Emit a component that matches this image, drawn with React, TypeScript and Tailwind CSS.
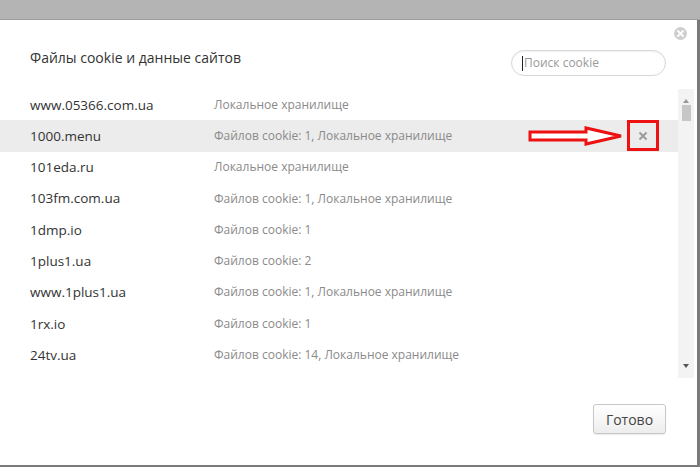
import React from "react";

type Site = { host: string; info: string };

const sites: Site[] = [
  { host: "www.05366.com.ua", info: "Локальное хранилище" },
  { host: "1000.menu", info: "Файлов cookie: 1, Локальное хранилище" },
  { host: "101eda.ru", info: "Локальное хранилище" },
  { host: "103fm.com.ua", info: "Файлов cookie: 1, Локальное хранилище" },
  { host: "1dmp.io", info: "Файлов cookie: 1" },
  { host: "1plus1.ua", info: "Файлов cookie: 2" },
  { host: "www.1plus1.ua", info: "Файлов cookie: 1, Локальное хранилище" },
  { host: "1rx.io", info: "Файлов cookie: 1" },
  { host: "24tv.ua", info: "Файлов cookie: 14, Локальное хранилище" },
];

const font = { fontFamily: '"Open Sans", "Noto Sans", sans-serif' };

function CloseCircle() {
  return (
    <svg width="13" height="13" viewBox="0 0 13 13">
      <circle cx="6.5" cy="6.5" r="6.5" fill="#cfcfcf" />
      <path d="M4 4 L9 9 M9 4 L4 9" stroke="#fff" strokeWidth="1.8" strokeLinecap="round" />
    </svg>
  );
}

function Arrow() {
  return (
    <svg width="96" height="22" viewBox="0 0 96 22">
      <path
        d="M2 7 L58 7 L58 3 L93 11 L58 19 L58 15 L2 15 Z"
        fill="#fff"
        stroke="#ee1111"
        strokeWidth="3"
        strokeLinejoin="miter"
      />
    </svg>
  );
}

function RemoveIcon() {
  return (
    <svg width="10" height="10" viewBox="0 0 10 10">
      <path d="M1.5 1.5 L8.5 8.5 M8.5 1.5 L1.5 8.5" stroke="#9a9a9a" strokeWidth="2" />
    </svg>
  );
}

export default function App() {
  return (
    <div className="w-[700px] h-[467px] bg-[#b4b4b4] flex flex-col overflow-hidden" style={font}>
      <div className="h-[20px] shrink-0 border-b border-[#9c9c9c]" />
      <div className="relative flex-1 bg-white border-r-[3px] border-b-[2px] border-[#7a7a7a] flex flex-col">
        <div className="absolute right-[10px] top-[7px]">
          <CloseCircle />
        </div>
        <div className="flex items-start justify-between pl-[30px] pr-[31px] h-[69px] shrink-0">
          <h1 className="mt-[28px] text-[14px] leading-[20px] text-[#333] font-normal">
            Файлы cookie и данные сайтов
          </h1>
          <div className="mt-[30px] w-[155px] h-[26px] rounded-full border border-[#d8d8d8] bg-white flex items-center pl-[10px] shadow-[inset_0_1px_2px_rgba(0,0,0,0.06)]">
            <span className="w-px h-[15px] bg-[#222] mr-[1px]" />
            <span className="text-[12px] text-[#999]">Поиск cookie</span>
          </div>
        </div>
        <div className="flex h-[289px] shrink-0">
          <div className="flex-1 flex flex-col">
            {sites.map((s, i) => (
              <div
                key={s.host}
                className={`relative h-[31.3px] shrink-0 flex items-center ${i === 1 ? "bg-[#ececec]" : ""}`}
              >
                <span className="w-[214px] shrink-0 pl-[30px] text-[13.5px] text-[#333]">{s.host}</span>
                <span className="text-[12px] text-[#8a8a8a]">{s.info}</span>
                {i === 1 && (
                  <>
                    <div className="absolute left-[528px] top-[5px]">
                      <Arrow />
                    </div>
                    <div className="absolute left-[627px] top-0 w-[32px] h-[31px] border-[3px] border-[#ee1111] flex items-center justify-center">
                      <RemoveIcon />
                    </div>
                  </>
                )}
              </div>
            ))}
          </div>
          <div className="w-[16px] mr-[3px] bg-[#f3f3f3] flex flex-col items-center">
            <div className="h-[14px] flex items-end justify-center">
              <span className="w-0 h-0 border-l-[3px] border-r-[3px] border-b-[4px] border-l-transparent border-r-transparent border-b-[#999]" />
            </div>
            <div className="mt-[2px] w-[9px] h-[16px] bg-[#c6c6c6]" />
            <div className="flex-1" />
            <div className="h-[14px] flex items-start justify-center">
              <span className="w-0 h-0 border-l-[3px] border-r-[3px] border-t-[4px] border-l-transparent border-r-transparent border-t-[#555]" />
            </div>
          </div>
        </div>
        <div className="flex justify-end pr-[31px] pt-[26px]">
          <button className="w-[73px] h-[30px] rounded-[3px] border border-[#c8c8c8] bg-gradient-to-b from-[#ffffff] to-[#ededed] text-[14px] text-[#444] shadow-[0_1px_1px_rgba(0,0,0,0.08)]">
            Готово
          </button>
        </div>
      </div>
    </div>
  );
}
